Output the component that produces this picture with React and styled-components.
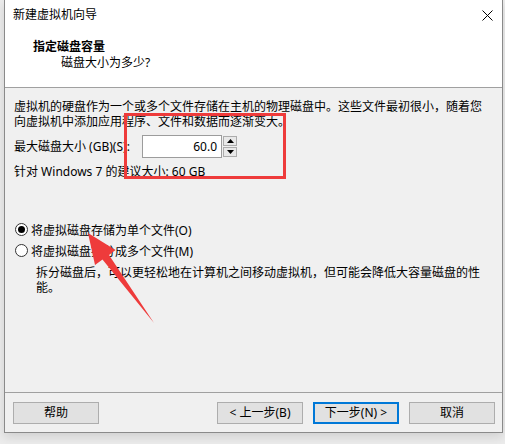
import React from "react";
import styled, { createGlobalStyle } from "styled-components";

const Global = createGlobalStyle`
  html, body { margin: 0; padding: 0; background: #ececec; }
  body { font-family: "Noto Sans", "Noto Sans CJK SC", sans-serif; font-size: 12px; color: #000; }
  * { box-sizing: border-box; }
`;

const Page = styled.div`
  position: relative;
  width: 505px;
  height: 444px;
  overflow: hidden;
`;

const Window = styled.div`
  margin-left: 4px;
  width: 499px;
  height: 433px;
  display: flex;
  flex-direction: column;
  background: #f0f0f0;
  border: 1px solid #8a8a8a;
  border-top: none;
  box-shadow: 0 4px 10px rgba(0,0,0,0.12);
`;

const TitleBar = styled.div`
  height: 30px;
  display: flex;
  align-items: center;
  justify-content: space-between;
  background: #fff;
  padding: 0 9px 0 8px;
  line-height: 30px;
`;

const Title = styled.span`
  font-size: 12px;
`;

const Header = styled.div`
  height: 58px;
  background: #fff;
  border-bottom: 1px solid #a0a0a0;
  padding: 9px 0 0 28px;
  line-height: 16px;
`;

const HeaderTitle = styled.div`
  font-weight: bold;
`;

const HeaderSub = styled.div`
  padding-left: 28px;
`;

const Body = styled.div`
  flex: 1;
  padding: 11px 12px 0 9px;
  display: flex;
  flex-direction: column;
`;

const Para = styled.p`
  margin: 0;
  line-height: 15px;
`;

const SizeRow = styled.div`
  margin-top: 6px;
  height: 23px;
  display: flex;
  align-items: center;
`;

const Label = styled.span`
  width: 128px;
  line-height: 15px;
  white-space: nowrap;
`;

const NumberBox = styled.div`
  width: 80px;
  height: 23px;
  background: #fff;
  border: 1px solid #9c9c9c;
  text-align: right;
  padding-right: 4px;
  line-height: 21px;
`;

const Spinner = styled.div`
  margin-left: 1px;
  display: flex;
  flex-direction: column;
  gap: 1px;
`;

const SpinBtn = styled.div`
  width: 14px;
  height: 10px;
  background: #e8e8e8;
  border: 1px solid #acacac;
  display: flex;
  align-items: center;
  justify-content: center;
`;

const Line = styled.div`
  margin-top: ${(p) => p.$mt || 0}px;
  line-height: 15px;
`;

const RadioGroup = styled.div`
  margin-top: 40px;
  display: flex;
  flex-direction: column;
`;

const RadioRow = styled.label`
  height: 21px;
  display: flex;
  align-items: center;
  gap: 3px;
`;

const RadioCircle = styled.span`
  margin-left: 1px;
  width: 13px;
  height: 13px;
  border-radius: 50%;
  border: 1px solid #333;
  background: #fff;
  display: flex;
  align-items: center;
  justify-content: center;
  &::after {
    content: "";
    width: 7px;
    height: 7px;
    border-radius: 50%;
    background: ${(p) => (p.$checked ? "#000" : "transparent")};
  }
`;

const Desc = styled.p`
  margin: 4px 0 0 22px;
  line-height: 15px;
`;

const Footer = styled.div`
  height: 40px;
  border-top: 1px solid #a0a0a0;
  padding: 9px 7px 0 8px;
  display: flex;
  align-items: flex-start;
  gap: 10px;
`;

const Button = styled.button`
  width: 86px;
  height: 22px;
  font: inherit;
  color: #000;
  background: #e1e1e1;
  border: ${(p) => (p.$default ? "2px solid #0078d7" : "1px solid #adadad")};
  padding: 0;
  line-height: 18px;
  margin-right: ${(p) => (p.$spaced ? "auto" : "0")};
`;

const Overlay = styled.svg`
  position: absolute;
  left: 0;
  top: 0;
  pointer-events: none;
`;

export default function App() {
  return (
    <Page>
      <Global />
      <Window>
        <TitleBar>
          <Title>新建虚拟机向导</Title>
          <svg width="11" height="11" viewBox="0 0 11 11">
            <path d="M0.5 0.5 L10.5 10.5 M10.5 0.5 L0.5 10.5" stroke="#000" strokeWidth="1" />
          </svg>
        </TitleBar>
        <Header>
          <HeaderTitle>指定磁盘容量</HeaderTitle>
          <HeaderSub>磁盘大小为多少?</HeaderSub>
        </Header>
        <Body>
          <Para>
            虚拟机的硬盘作为一个或多个文件存储在主机的物理磁盘中。这些文件最初很小，随着您
            <br />
            向虚拟机中添加应用程序、文件和数据而逐渐变大。
          </Para>
          <SizeRow>
            <Label>最大磁盘大小 (GB)(S):</Label>
            <NumberBox>60.0</NumberBox>
            <Spinner>
              <SpinBtn>
                <svg width="7" height="4" viewBox="0 0 7 4"><path d="M3.5 0 L7 4 L0 4 Z" fill="#000" /></svg>
              </SpinBtn>
              <SpinBtn>
                <svg width="7" height="4" viewBox="0 0 7 4"><path d="M0 0 L7 0 L3.5 4 Z" fill="#000" /></svg>
              </SpinBtn>
            </Spinner>
          </SizeRow>
          <Line $mt={6}>针对 Windows 7 的建议大小: 60 GB</Line>
          <RadioGroup>
            <RadioRow>
              <RadioCircle $checked />
              <span>将虚拟磁盘存储为单个文件(O)</span>
            </RadioRow>
            <RadioRow>
              <RadioCircle />
              <span>将虚拟磁盘拆分成多个文件(M)</span>
            </RadioRow>
          </RadioGroup>
          <Desc>拆分磁盘后，可以更轻松地在计算机之间移动虚拟机，但可能会降低大容量磁盘的性能。</Desc>
        </Body>
        <Footer>
          <Button $spaced>帮助</Button>
          <Button>&lt; 上一步(B)</Button>
          <Button $default>下一步(N) &gt;</Button>
          <Button>取消</Button>
        </Footer>
      </Window>
      <Overlay width="505" height="444" viewBox="0 0 505 444">
        <rect x="125.5" y="114.5" width="159" height="63" fill="none" stroke="#ee3b3b" strokeWidth="3" />
        <polygon
          points="88,233 115.5,250 109,255 154,323 102.5,259.5 95,265"
          fill="#ee3b3b"
        />
      </Overlay>
    </Page>
  );
}
